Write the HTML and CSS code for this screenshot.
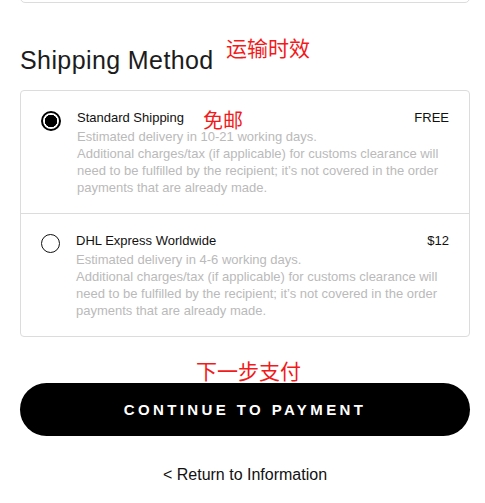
FILE: index.html
```html
<!DOCTYPE html>
<html lang="en">
<head>
<meta charset="utf-8">
<title>Shipping Method</title>
<link rel="stylesheet" href="styles.css">
</head>
<body>
<div class="page">
  <div class="prev-box"></div>
  <h2 class="heading">Shipping Method</h2>
  <div class="methods">
    <label class="method">
      <span class="radio radio-checked"></span>
      <span class="info">
        <span class="title-row"><span class="name">Standard Shipping</span><span class="price">FREE</span></span>
        <span class="desc">Estimated delivery in 10-21 working days.<br>Additional charges/tax (if applicable) for customs clearance will need to be fulfilled by the recipient; it’s not covered in the order payments that are already made.</span>
      </span>
    </label>
    <label class="method">
      <span class="radio"></span>
      <span class="info">
        <span class="title-row"><span class="name">DHL Express Worldwide</span><span class="price">$12</span></span>
        <span class="desc">Estimated delivery in 4-6 working days.<br>Additional charges/tax (if applicable) for customs clearance will need to be fulfilled by the recipient; it’s not covered in the order payments that are already made.</span>
      </span>
    </label>
  </div>
  <button class="continue">CONTINUE TO PAYMENT</button>
  <div class="return">&lt; Return to Information</div>

  <span class="note note-heading">运输时效</span>
  <span class="note note-free">免邮</span>
  <span class="note note-pay">下一步支付</span>
</div>
</body>
</html>
```
FILE: styles.css
```css
html, body {
  margin: 0;
  padding: 0;
  background: #fff;
}
body {
  font-family: "Liberation Sans", Arial, sans-serif;
  color: #111;
}
.page {
  position: relative;
  display: flow-root;
  padding: 0 15px 0 20px;
  width: 450px;
}
.prev-box {
  height: 40px;
  margin-top: -39px;
  border: 1px solid #dcdcdc;
  border-radius: 5px;
}
.heading {
  margin: 42px 0 0;
  font-size: 25px;
  line-height: 30px;
  font-weight: normal;
  letter-spacing: 0.4px;
  color: #1c1c1c;
}
.methods {
  margin-top: 15px;
  border: 1px solid #dcdcdc;
  border-radius: 4px;
}
.method {
  display: flex;
  padding: 17px 20px 18px 20px;
  height: 87px;
}
.method + .method {
  border-top: 1px solid #dcdcdc;
  padding-top: 17px;
}
.radio {
  flex: 0 0 auto;
  width: 17px;
  height: 17px;
  margin-top: 3px;
  border: 1.5px solid #111;
  border-radius: 50%;
  background: #fff;
  box-sizing: content-box;
}
.radio-checked {
  border: 2px solid #000;
  width: 16px;
  height: 16px;
  background: radial-gradient(circle, #000 0 6px, #fff 6.5px);
}
.info {
  flex: 1;
  margin-left: 16px;
  display: flex;
  flex-direction: column;
}
.title-row {
  display: flex;
  justify-content: space-between;
  font-size: 13px;
  line-height: 20px;
  color: #111;
}
.desc {
  font-size: 13px;
  line-height: 17px;
  color: #bababa;
}
.continue {
  display: block;
  width: 100%;
  height: 53px;
  margin-top: 46px;
  border: none;
  border-radius: 27px;
  background: #000;
  color: #fff;
  font-family: "Liberation Sans", Arial, sans-serif;
  font-weight: bold;
  font-size: 15px;
  letter-spacing: 3.4px;
  text-indent: 0;
  padding: 0;
}
.return {
  margin-top: 29px;
  text-align: center;
  font-size: 16px;
  line-height: 20px;
  color: #111;
}
.note {
  position: absolute;
  font-family: "Noto Sans CJK SC", sans-serif;
  color: #f21a1a;
  line-height: 1;
  white-space: nowrap;
}
.note-heading {
  left: 226px;
  top: 37px;
  font-size: 21px;
}
.note-free {
  left: 203px;
  top: 110px;
  font-size: 20px;
}
.note-pay {
  left: 196px;
  top: 360px;
  font-size: 21px;
}
```
